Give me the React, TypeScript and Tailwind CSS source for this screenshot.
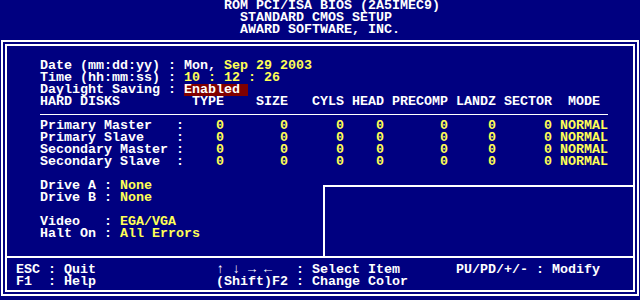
import React from "react";

type Seg = [number, string, string?];

const Y = "text-[#ffff55]";

function Row({ segs, base = 1 }: { segs: Seg[]; base?: number }) {
  let cur = base;
  const out: React.ReactNode[] = [];
  segs.forEach(([col, text, cls], i) => {
    const pad = " ".repeat(Math.max(0, col - cur));
    out.push(
      <React.Fragment key={i}>
        {pad}
        <span className={cls}>{text}</span>
      </React.Fragment>
    );
    cur = col + text.length;
  });
  return <div className="h-[12px] whitespace-pre">{out}</div>;
}

const drives = ["Primary Master", "Primary Slave", "Secondary Master", "Secondary Slave"];

export default function App() {
  return (
    <div
      className="w-[640px] h-[300px] overflow-hidden bg-[#000080] text-white font-bold text-[13.333px] leading-[12px]"
      style={{ fontFamily: '"Liberation Mono", "DejaVu Sans Mono", monospace' }}
    >
      {/* title */}
      <div>
        <Row base={0} segs={[[28, "ROM PCI/ISA BIOS (2A5IMEC9)"]]} />
        <Row base={0} segs={[[30, "STANDARD CMOS SETUP"]]} />
        <Row base={0} segs={[[30, "AWARD SOFTWARE, INC."]]} />
      </div>

      {/* double frame */}
      <div className="mt-[4px] mx-[1px] h-[256px] border-2 border-white p-[2px]">
        <div className="h-full border-2 border-white flex flex-col">
          <div className="h-[2px]" />
          {/* top section rows 4-13 */}
          <div className="pl-[1px] h-[120px]">
            <Row segs={[]} />
            <Row segs={[[5, "Date (mm:dd:yy) : Mon, "], [28, "Sep 29 2003", Y]]} />
            <Row segs={[[5, "Time (hh:mm:ss) : "], [23, "10 : 12 : 26", Y]]} />
            <div className="h-[12px] whitespace-pre">
              {"    Daylight Saving : "}
              <span className="inline-block h-[12px] bg-[#800000] align-top">{"Enabled "}</span>
            </div>
            <Row
              segs={[
                [5, "HARD DISKS"],
                [24, "TYPE"],
                [32, "SIZE"],
                [39, "CYLS"],
                [44, "HEAD"],
                [49, "PRECOMP"],
                [57, "LANDZ"],
                [63, "SECTOR"],
                [71, "MODE"],
              ]}
            />
            <div className="h-[12px] flex items-center">
              <div className="ml-[32px] w-[568px] h-[1px] bg-white" />
            </div>
            {drives.map((d) => (
              <Row
                key={d}
                segs={[
                  [5, d],
                  [22, ":"],
                  [27, "0", Y],
                  [35, "0", Y],
                  [42, "0", Y],
                  [47, "0", Y],
                  [55, "0", Y],
                  [61, "0", Y],
                  [68, "0", Y],
                  [70, "NORMAL", Y],
                ]}
              />
            ))}
          </div>

          {/* lower section rows 14-20 */}
          <div className="h-[88px] flex">
            <div className="w-[316px] pl-[1px]">
              <Row segs={[]} />
              <Row segs={[[5, "Drive A : "], [15, "None", Y]]} />
              <Row segs={[[5, "Drive B : "], [15, "None", Y]]} />
              <Row segs={[]} />
              <Row segs={[[5, "Video   : "], [15, "EGA/VGA", Y]]} />
              <Row segs={[[5, "Halt On : "], [15, "All Errors", Y]]} />
            </div>
            <div className="flex-1 mt-[17px] border-l-2 border-t-2 border-white" />
          </div>
          <div className="h-[2px] bg-white" />
          <div className="h-[6px]" />

          {/* footer rows 22-23 */}
          <div className="pl-[1px]">
            <Row
              segs={[
                [2, "ESC : Quit"],
                [27, "\u2191 \u2193 \u2192 \u2190"],
                [37, ": Select Item"],
                [57, "PU/PD/+/- : Modify"],
              ]}
            />
            <Row segs={[[2, "F1  : Help"], [27, "(Shift)F2 : Change Color"]]} />
          </div>
        </div>
      </div>
    </div>
  );
}
